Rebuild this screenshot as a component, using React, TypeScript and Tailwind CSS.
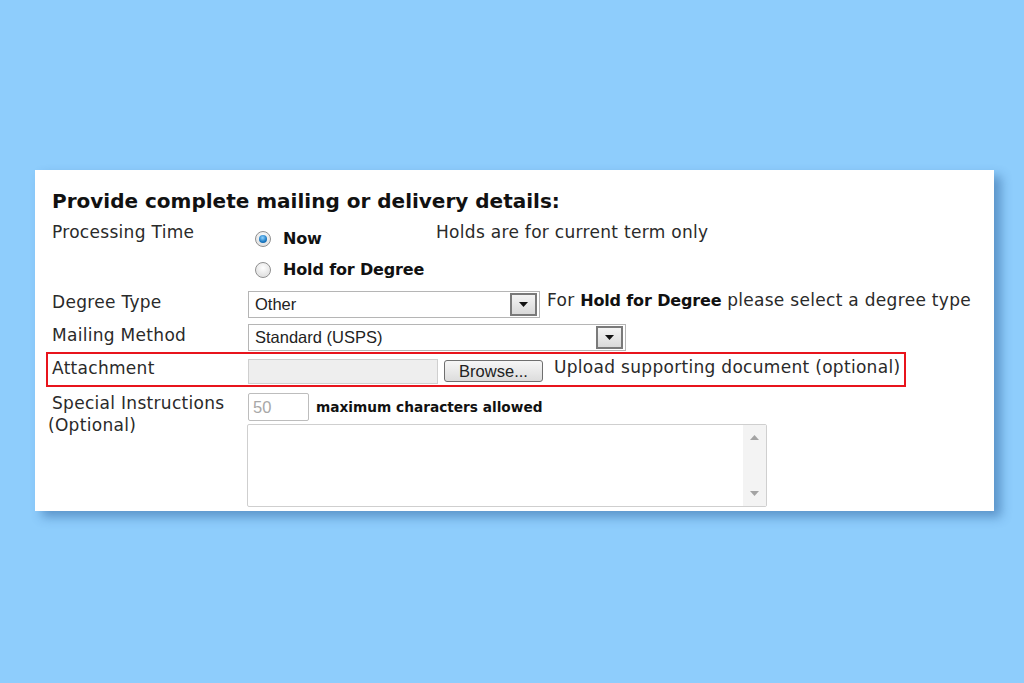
import type { ReactNode } from "react";

const verdana = "font-['DejaVu_Sans',Verdana,sans-serif]";
const arial = "font-['Liberation_Sans',Arial,sans-serif]";

function Radio({ checked }: { checked?: boolean }) {
  return (
    <span className="flex h-[16px] w-[16px] items-center justify-center rounded-full border border-[#8f8f8f] bg-[radial-gradient(circle_at_50%_35%,#ffffff,#d6d6d6)] shadow-[inset_0_0_1px_#fff]">
      {checked ? (
        <span className="h-[8px] w-[8px] rounded-full bg-[radial-gradient(circle_at_45%_35%,#8fd3ff,#1a78c2_60%,#0b4f8a)]" />
      ) : null}
    </span>
  );
}

function DropButton() {
  return (
    <span className="flex h-[23px] w-[27px] items-center justify-center border-2 border-[#7a7a7a] bg-[linear-gradient(#f4f4f4,#d9d9d9)]">
      <svg width="9" height="5" viewBox="0 0 9 5">
        <path d="M0 0h9L4.5 5z" fill="#111" />
      </svg>
    </span>
  );
}

function Select({ value, width }: { value: string; width: string }) {
  return (
    <div
      className={`flex h-[27px] items-center justify-between border border-[#b5b5b5] bg-white pl-[6px] pr-[2px] ${width}`}
    >
      <span className={`${arial} text-[16.5px] tracking-normal text-[#222]`}>{value}</span>
      <DropButton />
    </div>
  );
}

function Label({ children, raise = "" }: { children: ReactNode; raise?: string }) {
  return <div className={`w-[196px] shrink-0 leading-[22px] ${raise}`}>{children}</div>;
}

const bold = "text-[16px] font-bold tracking-[-0.15px] text-[#111]";

export default function App() {
  return (
    <div className="min-h-[683px] bg-[#8ecdfc] pt-[170px] pl-[35px]">
      <div
        className={`${verdana} h-[341px] w-[959px] bg-white pt-[19px] pl-[17px] text-[17px] tracking-[0.3px] text-[#2a2a2a] shadow-[7px_6px_10px_rgba(30,80,140,0.45)]`}
      >
        <h1 className="h-[24px] text-[20px] font-bold leading-[24px] tracking-normal text-[#111]">
          Provide complete mailing or delivery details:
        </h1>

        <div className="mt-[8px] flex">
          <Label>Processing Time</Label>
          <div className="flex w-[188px] shrink-0 flex-col pt-[7px] pl-[7px]">
            <label className={`flex h-[22px] items-center gap-[12px] ${bold}`}>
              <Radio checked />
              Now
            </label>
            <label className={`mt-[9px] flex h-[22px] items-center gap-[12px] ${bold}`}>
              <Radio />
              Hold for Degree
            </label>
          </div>
          <div className="leading-[22px]">Holds are for current term only</div>
        </div>

        <div className="mt-[10px] flex h-[27px] items-center">
          <Label raise="mb-[5px]">Degree Type</Label>
          <Select value="Other" width="w-[292px]" />
          <div className="mb-[8px] ml-[7px]">
            For <b className={bold}>Hold for Degree</b> please select a degree type
          </div>
        </div>

        <div className="mt-[6px] flex h-[27px] items-center">
          <Label raise="mb-[5px]">Mailing Method</Label>
          <Select value="Standard (USPS)" width="w-[378px]" />
        </div>

        <div className="-ml-[6px] mt-[1px] flex h-[35px] w-fit items-center border-2 border-[#e8141c] pl-[4px] pr-[4px]">
          <Label raise="mb-[3px]">Attachment</Label>
          <div className="mt-[3px] h-[25px] w-[190px] border border-[#cfcfcf] bg-[#eeeeee]" />
          <button
            className={`${arial} ml-[6px] mt-[2px] h-[22px] w-[99px] rounded-[3px] border border-[#6f6f6f] bg-[linear-gradient(#f6f6f6,#dcdcdc)] text-[16.5px] leading-[20px] tracking-normal text-[#222]`}
          >
            Browse...
          </button>
          <div className="mb-[6px] ml-[11px] leading-[22px]">Upload supporting document (optional)</div>
        </div>

        <div className="mt-[6px] flex">
          <Label raise="-mt-[1px]">
            Special Instructions
            <br />
            <span className="-ml-[4px]">(Optional)</span>
          </Label>
          <div className="flex flex-col">
            <div className="flex items-center">
              <div
                className={`${arial} flex h-[28px] w-[61px] items-center rounded-[2px] border border-[#bdbdbd] pl-[4px] text-[16.5px] tracking-normal text-[#a8a8a8]`}
              >
                50
              </div>
              <span className="ml-[7px] text-[13.7px] font-bold tracking-normal text-[#111]">
                maximum characters allowed
              </span>
            </div>
            <div className="mt-[3px] -ml-[1px] flex h-[83px] w-[520px] justify-end rounded-[2px] border border-[#cfcfcf] bg-white">
              <div className="flex w-[23px] flex-col items-center justify-between bg-[#f3f3f3] py-[10px]">
                <svg width="9" height="5" viewBox="0 0 9 5">
                  <path d="M0 5h9L4.5 0z" fill="#a3a3a3" />
                </svg>
                <svg width="9" height="5" viewBox="0 0 9 5">
                  <path d="M0 0h9L4.5 5z" fill="#a3a3a3" />
                </svg>
              </div>
            </div>
          </div>
        </div>
      </div>
    </div>
  );
}
